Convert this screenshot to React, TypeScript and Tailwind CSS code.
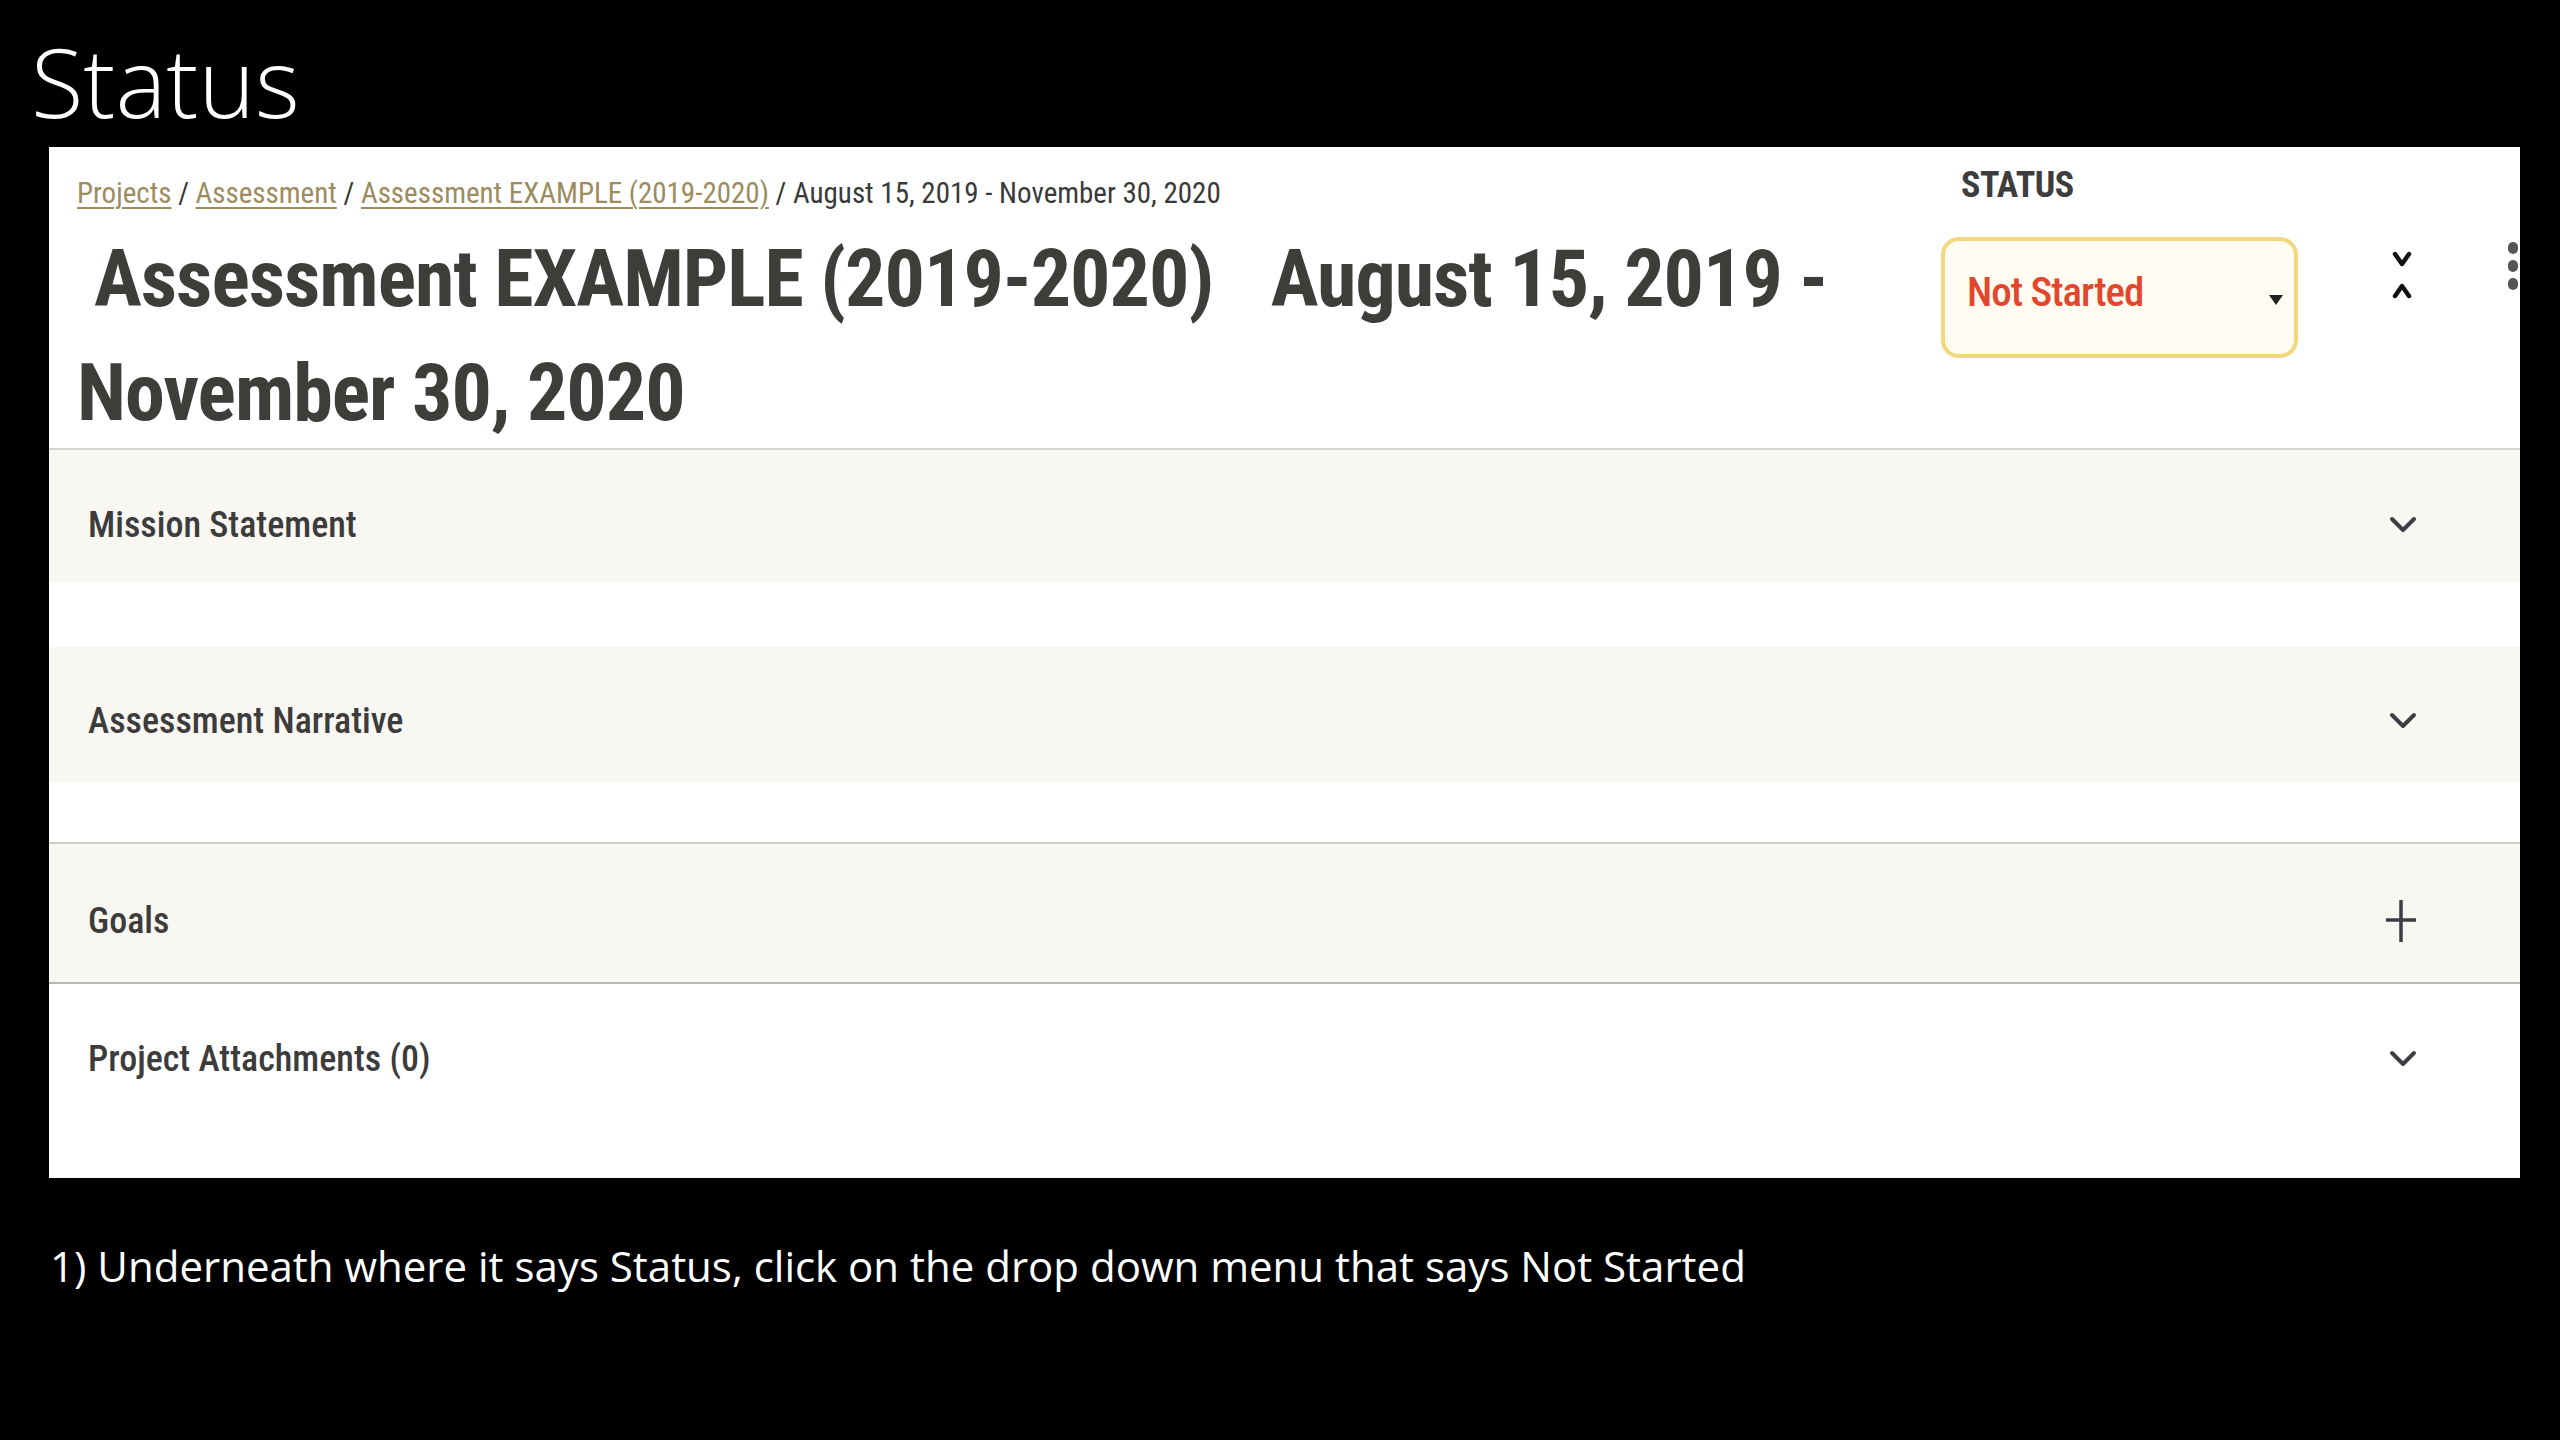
import React from "react";

const NARROW = "font-['Liberation_Sans_Narrow','Roboto_Condensed','Roboto',sans-serif]";

function Chevron() {
  return (
    <svg width="28" height="20" viewBox="0 0 28 20" className="shrink-0">
      <path d="M3 4 L14 15 L25 4" fill="none" stroke="#3b3f44" strokeWidth="4" strokeLinecap="round" strokeLinejoin="round" />
    </svg>
  );
}

function Plus() {
  return (
    <svg width="32" height="44" viewBox="0 0 32 44" className="shrink-0">
      <path d="M16 1 V43 M1 21 H31" fill="none" stroke="#3b3f44" strokeWidth="3.5" />
    </svg>
  );
}

function Row({
  label,
  bg,
  h,
  pt,
  icon,
}: {
  label: string;
  bg: string;
  h: string;
  pt: string;
  icon: React.ReactNode;
}) {
  return (
    <div className={`flex items-center justify-between pl-[39px] pr-[103px] ${bg} ${h} ${pt}`}>
      <span className={`${NARROW} font-medium text-[36px] leading-[38px] text-[#3c3c3c]`}>{label}</span>
      {icon}
    </div>
  );
}

export default function App() {
  return (
    <div className="w-[2560px] h-[1440px] bg-black overflow-hidden">
      <div className="pl-[31px] pt-[33px] font-['Open_Sans',sans-serif] font-light text-[96px] leading-[96px] text-white">
        Status
      </div>

      <div className="ml-[49px] mt-[18px] w-[2471px] h-[1031px] bg-white flex flex-col">
        {/* header */}
        <div className="flex items-start h-[303px] border-b-2 border-[#d6d4d0]">
          <div className="flex-1 pl-[28px] pt-[31px]">
            <div className={`${NARROW} text-[29px] leading-[30px] text-[#3a3a3a] whitespace-nowrap`}>
              <a className="text-[#9c8c5e] underline underline-offset-4 decoration-2">Projects</a>
              <span className="text-[#333]"> / </span>
              <a className="text-[#9c8c5e] underline underline-offset-4 decoration-2">Assessment</a>
              <span className="text-[#333]"> / </span>
              <a className="text-[#9c8c5e] underline underline-offset-4 decoration-2">Assessment EXAMPLE (2019-2020)</a>
              <span className="text-[#333]"> / </span>
              <span>August 15, 2019 - November 30, 2020</span>
            </div>
            <h1 className={`${NARROW} mt-[14px] font-bold text-[80px] leading-[114px] tracking-[-1px] text-[#3f3d3a]`}>
              <span className="ml-[17px]">Assessment EXAMPLE (2019-2020)</span>{" "}
              <span className="ml-[40px]">August 15, 2019 - November 30, 2020</span>
            </h1>
          </div>

          <div className="flex items-start pr-[2px]">
            <div className="w-[357px] pt-[21px]">
              <div className={`${NARROW} pl-[20px] font-bold text-[36px] leading-[34px] tracking-[-0.5px] text-[#3d3d3d]`}>
                STATUS
              </div>
              <div className="mt-[35px] h-[121px] rounded-[18px] border-4 border-[#f3d77c] bg-[#fffbf0] flex items-center justify-between pl-[22px] pr-[11px] pb-[10px]">
                <span className={`${NARROW} font-medium text-[41px] leading-[43px] tracking-[-1px] text-[#e2472d]`}>Not Started</span>
                <svg width="14" height="10" viewBox="0 0 14 10" className="mt-[14px]">
                  <path d="M0 0 H14 L7 10 Z" fill="#222" />
                </svg>
              </div>
            </div>
            <svg width="20" height="48" viewBox="0 0 20 48" className="ml-[94px] mt-[104px]">
              <path d="M3 3 L10 13 L17 3 M3 45 L10 35 L17 45" fill="none" stroke="#111" strokeWidth="4.5" strokeLinecap="round" strokeLinejoin="round" />
            </svg>
            <div className="ml-[96px] mt-[95px] flex flex-col gap-[6px]">
              <div className="w-[10px] h-[12px] rounded-full bg-[#555]" />
              <div className="w-[10px] h-[12px] rounded-full bg-[#555]" />
              <div className="w-[10px] h-[12px] rounded-full bg-[#555]" />
            </div>
          </div>
        </div>

        {/* sections */}
        <Row label="Mission Statement" bg="bg-[#f9f7f2]" h="h-[133px]" pt="pt-[16px]" icon={<Chevron />} />
        <div className="h-[64px]" />
        <Row label="Assessment Narrative" bg="bg-[#f9f7f2]" h="h-[136px]" pt="pt-[12px]" icon={<Chevron />} />
        <div className="h-[61px] border-b-2 border-[#cfcdc9]" />
        <div className="border-b-2 border-[#b9b7b3]">
          <Row label="Goals" bg="bg-[#f9f7f2]" h="h-[138px]" pt="pt-[16px]" icon={<Plus />} />
        </div>
        <Row label="Project Attachments (0)" bg="bg-white" h="h-[150px]" pt="pt-0" icon={<Chevron />} />
      </div>

      <div className="pl-[50px] mt-[66px] font-['Open_Sans',sans-serif] text-[42px] leading-[44px] text-white">
        1) Underneath where it says Status, click on the drop down menu that says Not Started
      </div>
    </div>
  );
}
